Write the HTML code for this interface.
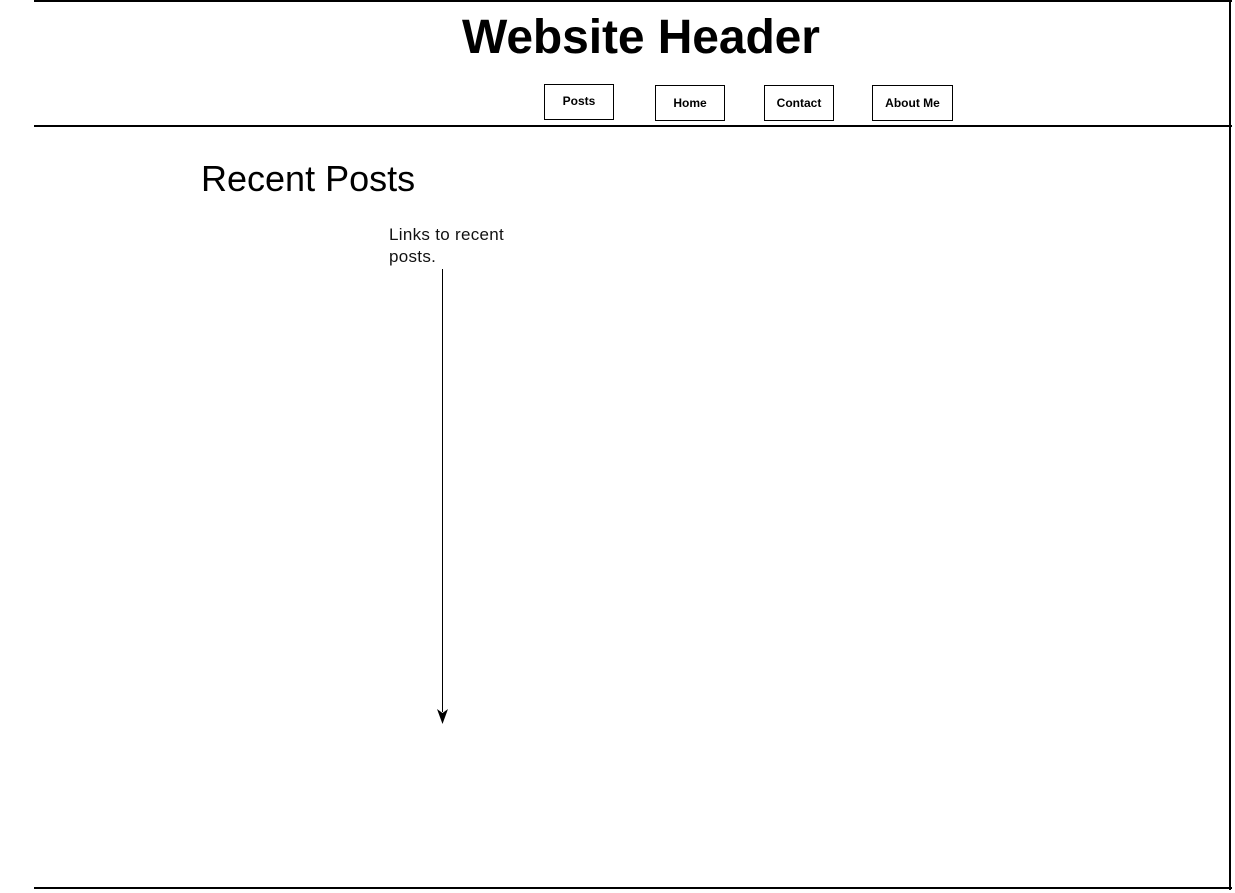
<!DOCTYPE html>
<html><head><style>
body{margin:0;width:1235px;height:893px;background:#fff;position:relative;overflow:hidden;font-family:"Liberation Sans",Arial,sans-serif;}
.l{position:absolute;background:#000;}
.b{position:absolute;border:1px solid #000;font-size:12px;font-weight:bold;text-align:center;box-sizing:border-box;}
</style></head><body>
<div class="l" style="left:34px;top:0;width:1198px;height:2px"></div>
<div class="l" style="left:1229px;top:0;width:2px;height:890px"></div>
<div class="l" style="left:34px;top:125px;width:1198px;height:2px"></div>
<div class="l" style="left:34px;top:887px;width:1198px;height:2px"></div>
<div style="position:absolute;left:462px;top:10px;font-size:48px;font-weight:bold;letter-spacing:-0.1px">Website Header</div>
<div class="b" style="left:544px;top:84px;width:70px;height:36px;line-height:32px">Posts</div>
<div class="b" style="left:655px;top:85px;width:70px;height:36px;line-height:34px">Home</div>
<div class="b" style="left:764px;top:85px;width:70px;height:36px;line-height:34px">Contact</div>
<div class="b" style="left:872px;top:85px;width:81px;height:36px;line-height:34px">About Me</div>
<div style="position:absolute;left:201px;top:158px;font-size:36px;">Recent Posts</div>
<div style="position:absolute;left:389px;top:224px;font-size:17px;line-height:22px;letter-spacing:0.3px;color:#111">Links to recent<br>posts.</div>
<svg style="position:absolute;left:0;top:0" width="1235" height="893"><line x1="442.5" y1="269" x2="442.5" y2="712" stroke="#000" stroke-width="1"/><path d="M437 709 L442.5 724 L448 709 L442.5 713 Z" fill="#000"/></svg>
</body></html>
